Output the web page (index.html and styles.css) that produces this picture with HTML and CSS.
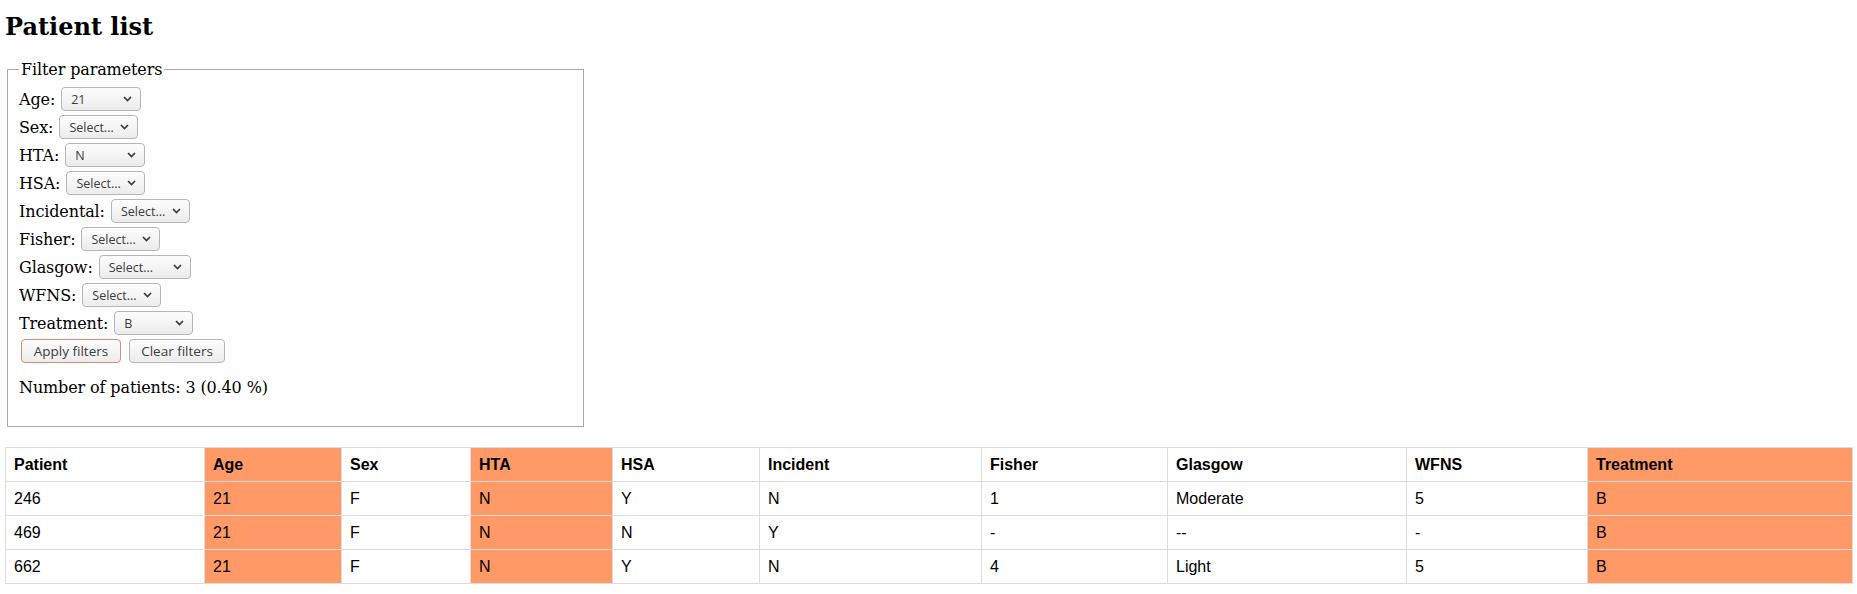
FILE: index.html
```html
<!DOCTYPE html>
<html lang="en">
<head>
<meta charset="utf-8">
<title>Patient list</title>
<link rel="stylesheet" href="styles.css">
</head>
<body>
<div class="page">
  <h1 class="title">Patient list</h1>
  <form class="filters">
    <fieldset class="filter-box">
      <legend class="filter-legend">Filter parameters</legend>
      <div class="row"><label class="lbl" for="f-age">Age:</label><span class="sel w80"><select id="f-age"><option>21</option></select><svg class="chev" width="9" height="6" viewBox="0 0 9 6"><path d="M1 1 L4.5 4.5 L8 1" fill="none" stroke="#3a3a3a" stroke-width="1.7"/></svg></span></div>
      <div class="row"><label class="lbl" for="f-sex">Sex:</label><span class="sel w79"><select id="f-sex"><option>Select...</option></select><svg class="chev" width="9" height="6" viewBox="0 0 9 6"><path d="M1 1 L4.5 4.5 L8 1" fill="none" stroke="#3a3a3a" stroke-width="1.7"/></svg></span></div>
      <div class="row"><label class="lbl" for="f-hta">HTA:</label><span class="sel w80"><select id="f-hta"><option>N</option></select><svg class="chev" width="9" height="6" viewBox="0 0 9 6"><path d="M1 1 L4.5 4.5 L8 1" fill="none" stroke="#3a3a3a" stroke-width="1.7"/></svg></span></div>
      <div class="row"><label class="lbl" for="f-hsa">HSA:</label><span class="sel w79"><select id="f-hsa"><option>Select...</option></select><svg class="chev" width="9" height="6" viewBox="0 0 9 6"><path d="M1 1 L4.5 4.5 L8 1" fill="none" stroke="#3a3a3a" stroke-width="1.7"/></svg></span></div>
      <div class="row"><label class="lbl" for="f-inc">Incidental:</label><span class="sel w79"><select id="f-inc"><option>Select...</option></select><svg class="chev" width="9" height="6" viewBox="0 0 9 6"><path d="M1 1 L4.5 4.5 L8 1" fill="none" stroke="#3a3a3a" stroke-width="1.7"/></svg></span></div>
      <div class="row"><label class="lbl" for="f-fis">Fisher:</label><span class="sel w79"><select id="f-fis"><option>Select...</option></select><svg class="chev" width="9" height="6" viewBox="0 0 9 6"><path d="M1 1 L4.5 4.5 L8 1" fill="none" stroke="#3a3a3a" stroke-width="1.7"/></svg></span></div>
      <div class="row"><label class="lbl" for="f-gla">Glasgow:</label><span class="sel w92"><select id="f-gla"><option>Select...</option></select><svg class="chev" width="9" height="6" viewBox="0 0 9 6"><path d="M1 1 L4.5 4.5 L8 1" fill="none" stroke="#3a3a3a" stroke-width="1.7"/></svg></span></div>
      <div class="row"><label class="lbl" for="f-wfn">WFNS:</label><span class="sel w79"><select id="f-wfn"><option>Select...</option></select><svg class="chev" width="9" height="6" viewBox="0 0 9 6"><path d="M1 1 L4.5 4.5 L8 1" fill="none" stroke="#3a3a3a" stroke-width="1.7"/></svg></span></div>
      <div class="row"><label class="lbl" for="f-tre">Treatment:</label><span class="sel w79"><select id="f-tre"><option>B</option></select><svg class="chev" width="9" height="6" viewBox="0 0 9 6"><path d="M1 1 L4.5 4.5 L8 1" fill="none" stroke="#3a3a3a" stroke-width="1.7"/></svg></span></div>
      <div class="row buttons"><button type="button" class="btn btn-apply">Apply filters</button><button type="button" class="btn btn-clear">Clear filters</button></div>
      <p class="count">Number of patients: 3 (0.40 %)</p>
    </fieldset>
  </form>
  <table class="patients">
    <thead>
      <tr>
        <th class="c-patient">Patient</th>
        <th class="c-age hl">Age</th>
        <th class="c-sex">Sex</th>
        <th class="c-hta hl">HTA</th>
        <th class="c-hsa">HSA</th>
        <th class="c-inc">Incident</th>
        <th class="c-fis">Fisher</th>
        <th class="c-gla">Glasgow</th>
        <th class="c-wfn">WFNS</th>
        <th class="c-tre hl">Treatment</th>
      </tr>
    </thead>
    <tbody>
      <tr><td>246</td><td class="hl">21</td><td>F</td><td class="hl">N</td><td>Y</td><td>N</td><td>1</td><td>Moderate</td><td>5</td><td class="hl">B</td></tr>
      <tr><td>469</td><td class="hl">21</td><td>F</td><td class="hl">N</td><td>N</td><td>Y</td><td>-</td><td>--</td><td>-</td><td class="hl">B</td></tr>
      <tr><td>662</td><td class="hl">21</td><td>F</td><td class="hl">N</td><td>Y</td><td>N</td><td>4</td><td>Light</td><td>5</td><td class="hl">B</td></tr>
    </tbody>
  </table>
</div>
</body>
</html>
```

FILE: styles.css
```css
* { box-sizing: border-box; }

body {
  margin: 0;
  background: #fff;
  color: #000;
  font-family: "DejaVu Serif", serif;
  font-size: 16px;
}

.page { padding: 5px; }

.title {
  font-family: "DejaVu Serif", serif;
  font-size: 24px;
  font-weight: bold;
  line-height: 28px;
  margin: 8px 0 0;
}

.filters { margin: 0; }

.filter-box {
  margin: 19px 2px 0;
  width: 577px;
  border: 1px solid #a9a9a9;
  padding: 6px 11px 11px;
  min-width: 0;
  letter-spacing: -0.12px;
}

.filter-legend {
  padding: 0 2px;
  font-size: 16px;
  line-height: 19px;
}

.row {
  display: flex;
  align-items: center;
  gap: 6px;
  height: 28px;
}

.lbl {
  font-size: 16px;
  line-height: 19px;
}

.sel {
  position: relative;
  display: inline-flex;
  height: 24px;
  letter-spacing: 0;
}

.sel select {
  -webkit-appearance: none;
  appearance: none;
  width: 100%;
  height: 24px;
  margin: 0;
  border: 1px solid #b6b6b6;
  border-radius: 4px;
  background: linear-gradient(#fdfdfd, #ececec);
  font-family: "Open Sans", sans-serif;
  font-size: 12.5px;
  color: #3c3c3c;
  padding: 0 16px 0 9px;
  outline: none;
}

.chev {
  position: absolute;
  right: 9px;
  top: 9px;
  pointer-events: none;
}

.w79 { width: 79px; }
.w80 { width: 80px; }
.w92 { width: 92px; }

.buttons {
  gap: 8px;
  padding-left: 2px;
}

.btn {
  height: 24px;
  margin: 0;
  padding: 0;
  border: 1px solid #b6b6b6;
  border-radius: 4px;
  background: linear-gradient(#fdfdfd, #ececec);
  font-family: "Open Sans", sans-serif;
  font-size: 13.5px;
  letter-spacing: 0;
  color: #3c3c3c;
}

.btn-apply { width: 100px; border-color: #df8a6c; }
.btn-clear { width: 96px; }

.count {
  margin: 13px 0 18px;
  font-size: 16px;
  line-height: 19px;
}

.patients {
  margin-top: 20px;
  width: 100%;
  border-collapse: collapse;
  table-layout: fixed;
  font-family: "Liberation Sans", Arial, sans-serif;
  font-size: 16px;
  color: #000;
}

.patients th,
.patients td {
  border: 1px solid #dddddd;
  padding: 7px 8px;
  line-height: 19px;
  text-align: left;
  vertical-align: middle;
}

.patients th { font-weight: bold; }

.patients .hl { background: #ff9966; }

.c-patient { width: 199px; }
.c-age { width: 137px; }
.c-sex { width: 129px; }
.c-hta { width: 142px; }
.c-hsa { width: 147px; }
.c-inc { width: 222px; }
.c-fis { width: 186px; }
.c-gla { width: 239px; }
.c-wfn { width: 181px; }
.c-tre { width: 265px; }
```
